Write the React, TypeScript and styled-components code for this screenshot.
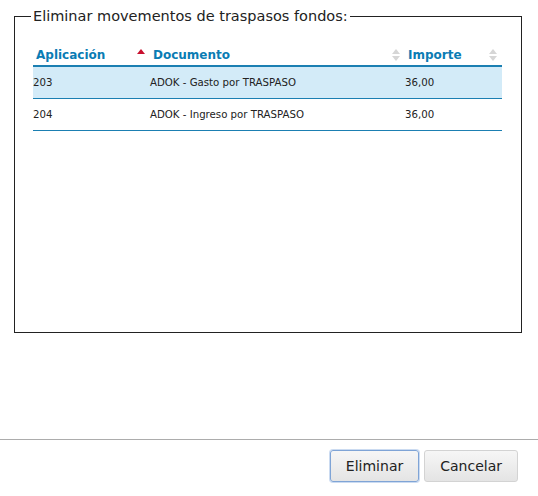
import React from "react";
import styled, { createGlobalStyle } from "styled-components";

const Global = createGlobalStyle`
  html, body { margin: 0; padding: 0; background: #fff; }
  body { font-family: "DejaVu Sans", Verdana, sans-serif; }
`;

const Dialog = styled.div`
  width: 538px;
  height: 496px;
  display: flex;
  flex-direction: column;
  box-sizing: border-box;
`;

const Body = styled.div`
  flex: 1;
  padding: 8px 16px 0 14px;
`;

const Fieldset = styled.fieldset`
  margin: 0;
  box-sizing: border-box;
  width: 508px;
  min-width: 0;
  height: 325px;
  border: 1px solid #222;
  padding: 0 19px 0 18px;
`;

const Legend = styled.legend`
  font-size: 14.5px;
  color: #222;
  padding: 0 2px;
  margin-left: -2px;
  line-height: 17px;
`;

const Table = styled.table`
  width: 469px;
  margin-top: 16px;
  border-collapse: collapse;
  table-layout: fixed;
`;

const Th = styled.th<{ $w: number }>`
  box-sizing: border-box;
  width: ${(p) => p.$w}px;
  position: relative;
  text-align: left;
  font-size: 12px;
  font-weight: bold;
  color: #0a7cb4;
  padding: 4px 0 0 3px;
  height: 25px;
  vertical-align: middle;
  border-bottom: 2px solid #1b7fb2;
`;

const SortIcon = styled.svg`
  position: absolute;
  right: 5px;
  top: 8px;
`;

const Tr = styled.tr<{ $sel?: boolean }>`
  background: ${(p) => (p.$sel ? "#d3ebf8" : "#fff")};
`;

const Td = styled.td`
  font-size: 10.2px;
  color: #222;
  height: 31px;
  padding: 0;
  vertical-align: middle;
  border-bottom: 1px solid #1b7fb2;
`;

const Footer = styled.div`
  border-top: 1px solid #acacac;
  height: 57px;
  display: flex;
  justify-content: flex-end;
  align-items: flex-start;
  gap: 5px;
  padding: 10px 20px 0 0;
  box-sizing: border-box;
`;

const Button = styled.button<{ $focus?: boolean }>`
  font-family: "DejaVu Sans", Verdana, sans-serif;
  font-size: 14px;
  color: #222;
  height: 32px;
  padding: 0 15px;
  border-radius: 3px;
  border: 1px solid ${(p) => (p.$focus ? "#7fa4d6" : "#d3d3d3")};
  box-shadow: ${(p) => (p.$focus ? "0 0 0 1px rgba(140,175,225,0.45)" : "none")};
  background: linear-gradient(#f6f6f6, #e4e4e4);
`;

const Up = ({ c }: { c: string }) => (
  <SortIcon width="8" height="12" viewBox="0 0 8 12">
    <path d="M0 5 L4 0 L8 5 Z" fill={c} />
  </SortIcon>
);

const Both = () => (
  <SortIcon width="8" height="12" viewBox="0 0 8 12">
    <path d="M0 5 L4 0 L8 5 Z" fill="#d6d6d6" />
    <path d="M0 7 L4 12 L8 7 Z" fill="#d6d6d6" />
  </SortIcon>
);

const rows = [
  { a: "203", d: "ADOK - Gasto por TRASPASO", i: "36,00", sel: true },
  { a: "204", d: "ADOK - Ingreso por TRASPASO", i: "36,00", sel: false },
];

export default function App() {
  return (
    <Dialog>
      <Global />
      <Body>
        <Fieldset>
          <Legend>Eliminar movementos de traspasos fondos:</Legend>
          <Table>
            <thead>
              <tr>
                <Th $w={117}>
                  Aplicación
                  <Up c="#c8102e" />
                </Th>
                <Th $w={255}>
                  Documento
                  <Both />
                </Th>
                <Th $w={97}>
                  Importe
                  <Both />
                </Th>
              </tr>
            </thead>
            <tbody>
              {rows.map((r) => (
                <Tr key={r.a} $sel={r.sel}>
                  <Td>{r.a}</Td>
                  <Td>{r.d}</Td>
                  <Td>{r.i}</Td>
                </Tr>
              ))}
            </tbody>
          </Table>
        </Fieldset>
      </Body>
      <Footer>
        <Button $focus>Eliminar</Button>
        <Button>Cancelar</Button>
      </Footer>
    </Dialog>
  );
}
